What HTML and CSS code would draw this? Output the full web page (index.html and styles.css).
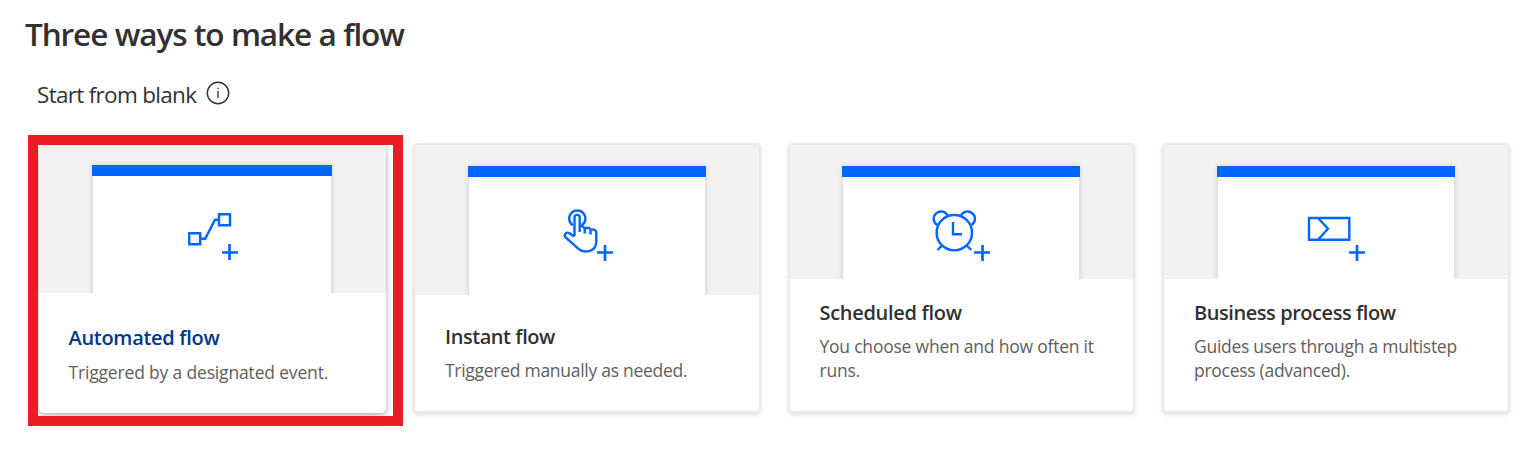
FILE: index.html
```html
<!DOCTYPE html>
<html lang="en">
<head>
<meta charset="utf-8">
<title>Three ways to make a flow</title>
<link rel="stylesheet" href="styles.css">
</head>
<body>
<main class="page">
  <h1 class="title">Three ways to make a flow</h1>
  <div class="subtitle">
    <span class="subtitle-text">Start from blank</span>
    <svg class="info" viewBox="0 0 24 24"><circle cx="12" cy="12" r="10.7" fill="none" stroke="#323130" stroke-width="1.4"/><path d="M12 10v7M12 6.7v1.6" stroke="#323130" stroke-width="1.3"/></svg>
  </div>
  <div class="cards">
    <article class="card selected">
      <div class="preview"><div class="sheet">
        <svg class="icon" viewBox="0 0 80 70"><path d="M14.2 33.2h11v11h-11zM44 14.3h11v11H44zM26 38.7h4.2L40 19.7h4"/><path class="plus" d="M47 52.5h16M54.5 44v16"/></svg>
      </div></div>
      <div class="body"><h2 class="name">Automated flow</h2><p class="desc d1">Triggered by a designated event.</p></div>
      <div class="highlight"></div>
    </article>
    <article class="card">
      <div class="preview"><div class="sheet">
        <svg class="icon" viewBox="0 0 80 70"><path d="M22.8 25.3A8.1 8.1 0 1 1 31.8 25.3M24.5 36.2V17.5a2.6 2.6 0 0 1 5.2 0V32M29.7 26.5q4.8-1 5 3v4M35 28.5q5-2 5.5 1.8v4.2M40.5 29.8q5.8-1.1 5.8 3v8.5c0 12.2-13.6 11.4-17.8 7.5L15.4 37.2c-1.4-2 0-5.2 3-4.4 2 .5 3.6 2.4 6.1 3.4"/><path class="plus" d="M47 52.5h16M55 45v16"/></svg>
      </div></div>
      <div class="body"><h2 class="name t2">Instant flow</h2><p class="desc">Triggered manually as needed.</p></div>
    </article>
    <article class="card tall third">
      <div class="preview"><div class="sheet">
        <svg class="icon" viewBox="0 0 80 70"><circle cx="34.3" cy="32.7" r="17.7"/><path d="M17.5 25.2A7.3 7.3 0 1 1 27.8 16.2M40.8 16.2A7.3 7.3 0 1 1 51.1 25.2M33 22v12.2h9M22 45.5l-4.5 4.5M46.7 45.5l4.5 4.5"/><path class="plus" d="M54 52.5h16M62.5 45v16"/></svg>
      </div></div>
      <div class="body"><h2 class="name">Scheduled flow</h2><p class="desc d3">You choose when and how often it<br>runs.</p></div>
    </article>
    <article class="card tall fourth">
      <div class="preview"><div class="sheet">
        <svg class="icon" viewBox="0 0 80 70"><path d="M14 18h40.3v21.7H14zM23 18l10 10.8L23 39.7"/><path class="plus" d="M54 52.5h16M62 45v16"/></svg>
      </div></div>
      <div class="body"><h2 class="name t4">Business process flow</h2><p class="desc">Guides users through a multistep<br>process (advanced).</p></div>
    </article>
  </div>
</main>
</body>
</html>
```
FILE: styles.css
```css
* { box-sizing: border-box; }
body {
  margin: 0;
  background: #fff;
  color: #323130;
  font-family: "Segoe UI", "Open Sans", "Noto Sans", sans-serif;
}
.page { height: 462px; padding-top: 12px; }
.title {
  margin: 0 0 0 25px;
  font-size: 31.5px;
  line-height: 44px;
  font-weight: 600;
  letter-spacing: -1.1px;
  word-spacing: 0.4px;
  white-space: nowrap;
}
.subtitle {
  display: flex;
  align-items: center;
  margin: 23px 0 0 37px;
  height: 32px;
  font-size: 22.5px;
  line-height: 32px;
}
.subtitle-text { width: 169.3px; letter-spacing: -0.7px; white-space: nowrap; }
.info { width: 24px; height: 24px; margin-top: -5px; }
.cards {
  display: flex;
  gap: 26.5px;
  margin: 32px 0 0 38.5px;
}
.card {
  position: relative;
  flex: none;
  width: 348px;
  height: 270px;
  border: 2px solid #eaeaea;
  border-radius: 5px;
  background: #fff;
  box-shadow: 0 2px 4px rgba(0, 0, 0, .12);
}
.third { width: 347px; }
.fourth { margin-left: 1px; }
.preview {
  display: flex;
  justify-content: center;
  height: 150px;
  padding-top: 21px;
  background: #f3f2f1;
  overflow: hidden;
}
.tall .preview { height: 134px; }
.sheet {
  width: 236px;
  height: 140px;
  background: #fff;
  box-shadow: 0 0 6px rgba(0, 0, 0, .17);
}
.sheet::before {
  content: "";
  display: block;
  height: 11px;
  margin: 0 -1px;
  background: #06f;
}
.icon {
  display: block;
  width: 80px;
  height: 70px;
  margin: 23px 0 0 81px;
  fill: none;
  stroke: #06f;
  stroke-width: 2.4;
}
.tall .icon { margin-left: 77px; }
.icon .plus { stroke-width: 2.7; }
.body { padding: 28px 0 0 30px; }
.tall .body { padding-top: 20px; }
.name {
  margin: 0;
  font-size: 20px;
  line-height: 28px;
  font-weight: 600;
  letter-spacing: -0.3px;
  white-space: nowrap;
}
.t2, .t4 { letter-spacing: -0.44px; }
.desc {
  margin: 7px 0 0;
  color: #605e5c;
  font-size: 17.5px;
  line-height: 24px;
  letter-spacing: -0.28px;
  white-space: nowrap;
}
.d1 { letter-spacing: -0.17px; }
.d3 { letter-spacing: -0.22px; }
.selected {
  width: 347.5px;
  margin-right: .5px;
  border: 0;
  box-shadow: 0 6px 14px rgba(0, 0, 0, .13), 0 1px 4px rgba(0, 0, 0, .25);
}
.selected .preview { padding-top: 22px; }
.selected .sheet { width: 238px; }
.selected .icon { margin: 24px 0 0 82px; }
.selected .body { padding-top: 31px; }
.selected .name { color: #00358e; }
.selected .desc { margin-top: 8px; }
.highlight {
  position: absolute;
  left: -10.5px;
  top: -8px;
  width: 375px;
  height: 291px;
  border: 10px solid #ed1c24;
}
```
